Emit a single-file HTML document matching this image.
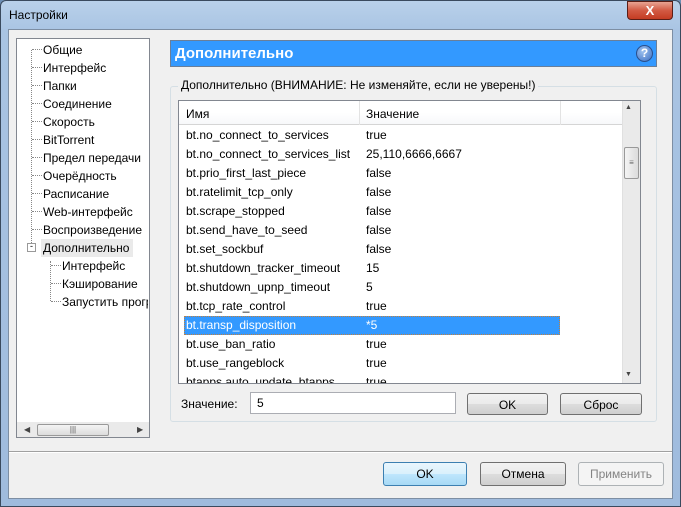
<!DOCTYPE html><html><head><meta charset="utf-8"><style>
*{margin:0;padding:0;box-sizing:border-box}
body{width:681px;height:507px;overflow:hidden;font-family:"Liberation Sans",sans-serif;font-size:12px;color:#000;background:#6d8fb5;position:relative}
.a{position:absolute}
.frame{left:0;top:0;width:681px;height:507px;background:linear-gradient(#b9d1ea,#a9c4e3 30px,#9fbbdd);border:1px solid #3a4a5e;border-radius:6px 6px 0 0}
.client{left:8px;top:29px;width:665px;height:470px;background:#f0f0f0;border:1px solid #7d8ea3}
.btn{border:1px solid #707070;border-radius:3px;background:linear-gradient(#f2f2f2,#ebebeb 50%,#dddddd 51%,#cfcfcf);text-align:center;line-height:22px}
.row{position:absolute;left:186px;height:19px;line-height:19px;width:380px;white-space:nowrap}
.row span{position:absolute;left:180px}
.tree div{position:absolute;height:18px;line-height:18px;white-space:nowrap}
</style></head><body>
<div class="a frame"></div>
<div class="a" style="left:9px;top:8px;font-size:12px">Настройки</div>
<div class="a" style="left:627px;top:1px;width:46px;height:19px;border:1px solid #5a1e16;border-radius:0 0 4px 4px;background:linear-gradient(#e8a493,#d25a43 50%,#c43c23);color:#fff;font-weight:bold;text-align:center;line-height:17px;font-size:13px">X</div>
<div class="a client"></div>
<!-- tree -->
<div class="a" style="left:16px;top:38px;width:134px;height:400px;background:#fff;border:1px solid #828790"></div>
<div class="a tree" style="left:0;top:0;width:150px">
<div class="a" style="left:31px;top:50px;height:195px;border-left:1px dotted #888"></div>
<div class="a" style="left:50px;top:261px;height:40px;border-left:1px dotted #888"></div>
<div style="left:32px;top:40px;width:10px;border-bottom:1px dotted #888;height:10px"></div><div style="left:43px;top:41px">Общие</div>
<div style="left:32px;top:58px;width:10px;border-bottom:1px dotted #888;height:10px"></div><div style="left:43px;top:59px">Интерфейс</div>
<div style="left:32px;top:76px;width:10px;border-bottom:1px dotted #888;height:10px"></div><div style="left:43px;top:77px">Папки</div>
<div style="left:32px;top:94px;width:10px;border-bottom:1px dotted #888;height:10px"></div><div style="left:43px;top:95px">Соединение</div>
<div style="left:32px;top:112px;width:10px;border-bottom:1px dotted #888;height:10px"></div><div style="left:43px;top:113px">Скорость</div>
<div style="left:32px;top:130px;width:10px;border-bottom:1px dotted #888;height:10px"></div><div style="left:43px;top:131px">BitTorrent</div>
<div style="left:32px;top:148px;width:10px;border-bottom:1px dotted #888;height:10px"></div><div style="left:43px;top:149px">Предел передачи</div>
<div style="left:32px;top:166px;width:10px;border-bottom:1px dotted #888;height:10px"></div><div style="left:43px;top:167px">Очерёдность</div>
<div style="left:32px;top:184px;width:10px;border-bottom:1px dotted #888;height:10px"></div><div style="left:43px;top:185px">Расписание</div>
<div style="left:32px;top:202px;width:10px;border-bottom:1px dotted #888;height:10px"></div><div style="left:43px;top:203px">Web-интерфейс</div>
<div style="left:32px;top:220px;width:10px;border-bottom:1px dotted #888;height:10px"></div><div style="left:43px;top:221px">Воспроизведение</div>
<div style="left:27px;top:243px;width:9px;height:9px;border:1px solid #999;background:#fff;line-height:5px;font-size:9px;text-align:center">-</div>
<div style="left:41px;top:239px;width:92px;background:#eaeaea;padding-left:2px">Дополнительно</div>
<div style="left:51px;top:256px;width:10px;border-bottom:1px dotted #888;height:10px"></div><div style="left:62px;top:257px">Интерфейс</div>
<div style="left:51px;top:274px;width:10px;border-bottom:1px dotted #888;height:10px"></div><div style="left:62px;top:275px">Кэширование</div>
<div style="left:51px;top:292px;width:10px;border-bottom:1px dotted #888;height:10px"></div><div style="left:62px;top:293px;width:86px;overflow:hidden">Запустить программу</div>
</div>
<div class="a" style="left:17px;top:422px;width:132px;height:15px;background:#eaeaea"></div>
<div class="a" style="left:37px;top:424px;width:72px;height:12px;border:1px solid #999;border-radius:2px;background:linear-gradient(#f4f4f4,#dcdcdc);text-align:center;font-size:8px;line-height:10px;color:#555">|||</div>
<div class="a" style="left:24px;top:425px;font-size:8px;color:#444">◀</div>
<div class="a" style="left:137px;top:425px;font-size:8px;color:#444">▶</div>
<!-- header -->
<div class="a" style="left:170px;top:40px;width:487px;height:27px;background:#3399ff;border:1px solid #6a7f99;color:#fff;font-weight:bold;font-size:15px;line-height:25px;padding-left:4px">Дополнительно</div>
<div class="a" style="left:636px;top:45px;width:17px;height:17px;border-radius:50%;background:radial-gradient(circle at 40% 35%,#9fc3f0,#3c6fc2);border:1px solid #2a4f8c;color:#fff;font-size:12px;text-align:center;line-height:15px;font-weight:bold">?</div>
<!-- group -->
<div class="a" style="left:170px;top:86px;width:487px;height:336px;border:1px solid #d5dfe5;border-radius:3px"></div>
<div class="a" style="left:178px;top:78px;background:#f0f0f0;padding:0 3px">Дополнительно (ВНИМАНИЕ: Не изменяйте, если не уверены!)</div>
<!-- list -->
<div class="a" style="left:178px;top:100px;width:463px;height:284px;background:#fff;border:1px solid #828790;overflow:hidden">
<div class="a" style="left:0;top:0;width:443px;height:24px;background:linear-gradient(#fff,#fff 50%,#f7f8fa);border-bottom:1px solid #d5d5d5"></div>
<div class="a" style="left:180px;top:0;height:24px;border-left:1px solid #e3e3e3"></div>
<div class="a" style="left:381px;top:0;height:24px;border-left:1px solid #e3e3e3"></div>
<div class="a" style="left:7px;top:6px">Имя</div>
<div class="a" style="left:187px;top:6px">Значение</div>
<div class="a" style="left:443px;top:0;width:18px;height:282px;background:#eaeaea;border-left:1px solid #e0e0e0"></div>
<div class="a" style="left:446px;top:3px;font-size:7px;color:#444">▲</div>
<div class="a" style="left:446px;top:270px;font-size:7px;color:#444">▼</div>
<div class="a" style="left:445px;top:46px;width:15px;height:32px;border:1px solid #999;border-radius:2px;background:linear-gradient(90deg,#f4f4f4,#dcdcdc);font-size:8px;text-align:center;line-height:30px;color:#666">≡</div>
</div>
<div class="a" style="left:184px;top:316px;width:376px;height:19px;background:#3399ff;border:1px dotted #c08040"></div>
<div class="a">
<div class="row" style="top:126px">bt.no_connect_to_services<span>true</span></div>
<div class="row" style="top:145px">bt.no_connect_to_services_list<span>25,110,6666,6667</span></div>
<div class="row" style="top:164px">bt.prio_first_last_piece<span>false</span></div>
<div class="row" style="top:183px">bt.ratelimit_tcp_only<span>false</span></div>
<div class="row" style="top:202px">bt.scrape_stopped<span>false</span></div>
<div class="row" style="top:221px">bt.send_have_to_seed<span>false</span></div>
<div class="row" style="top:240px">bt.set_sockbuf<span>false</span></div>
<div class="row" style="top:259px">bt.shutdown_tracker_timeout<span>15</span></div>
<div class="row" style="top:278px">bt.shutdown_upnp_timeout<span>5</span></div>
<div class="row" style="top:297px">bt.tcp_rate_control<span>true</span></div>
<div class="row" style="top:316px;color:#fff">bt.transp_disposition<span>*5</span></div>
<div class="row" style="top:335px">bt.use_ban_ratio<span>true</span></div>
<div class="row" style="top:354px">bt.use_rangeblock<span>true</span></div>
<div class="row" style="top:373px;height:10px;overflow:hidden">btapps.auto_update_btapps<span>true</span></div>
</div>
<div class="a" style="left:181px;top:397px">Значение:</div>
<div class="a" style="left:250px;top:392px;width:206px;height:22px;border:1px solid #abadb3;background:#fff;padding-left:6px;line-height:20px">5</div>
<div class="a btn" style="left:467px;top:393px;width:81px;height:22px">OK</div>
<div class="a btn" style="left:560px;top:393px;width:82px;height:22px">Сброс</div>
<div class="a" style="left:9px;top:451px;width:663px;border-top:1px solid #a0a0a0;border-bottom:1px solid #fff"></div>
<div class="a btn" style="left:383px;top:462px;width:84px;height:24px;border-color:#3c7fb1;background:linear-gradient(#eaf6fd,#d9f0fc 50%,#bee6fd 51%,#a7d9f5)">OK</div>
<div class="a btn" style="left:480px;top:462px;width:86px;height:24px">Отмена</div>
<div class="a btn" style="left:578px;top:462px;width:86px;height:24px;background:#f4f4f4;border-color:#adb2b5;color:#838383">Применить</div>
</body></html>
